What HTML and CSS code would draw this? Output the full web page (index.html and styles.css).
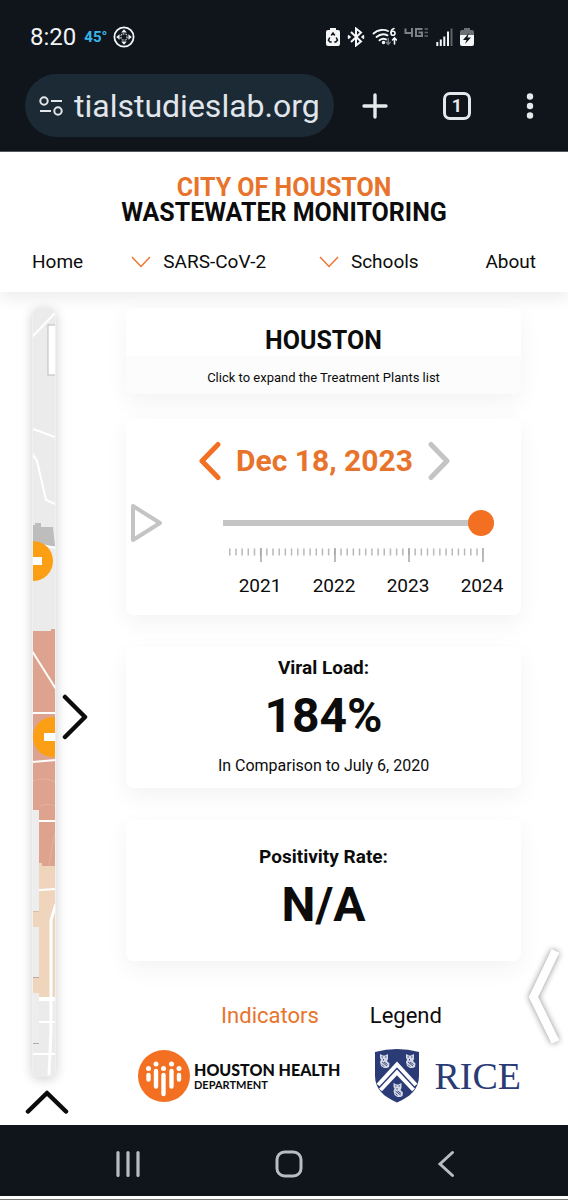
FILE: index.html
```html
<!DOCTYPE html>
<html lang="en">
<head>
<meta charset="utf-8">
<meta name="viewport" content="width=device-width, initial-scale=1">
<title>City of Houston Wastewater Monitoring</title>
<link rel="stylesheet" href="styles.css">
</head>
<body>
<div class="browser">
  <div class="status">
    <span class="clock">8:20</span>
    <span class="temp">45°</span>
    <svg class="status-disc" width="22" height="22" viewBox="0 0 22 22" fill="none" stroke="#f2f4f6" stroke-width="1.8"><circle cx="11" cy="11" r="9.6"/><g fill="#f2f4f6" stroke="none"><path d="M11 3.200l2.800 3.400H8.200zM11 18.800l2.800-3.400H8.200zM3.200 11l3.400-2.800v5.600zM18.800 11l-3.400-2.800v5.600z"/></g><rect x="8" y="8" width="6" height="6" rx="1.500" stroke-width="1" stroke-dasharray="2 1"/></svg>
    <span class="status-icons">
      <svg width="14" height="20" viewBox="0 0 14 20"><path d="M4 1h6v2h2a2 2 0 0 1 2 2v12a2 2 0 0 1-2 2H2a2 2 0 0 1-2-2V5a2 2 0 0 1 2-2h2z" fill="#f5f6f7"/><path d="M5.200 8.500L7 6l1.800 2.500M10.200 10.500l1.300 2.700-1.700 1.700H8.300M5.700 14.900H4l-1.600-1.700 1.400-2.700" fill="none" stroke="#10151c" stroke-width="1.500"/></svg>
      <svg width="18" height="20" viewBox="0 0 18 20" fill="none" stroke="#f5f6f7" stroke-width="2"><path d="M4 5l10 9.500-5 4V1.500l5 4L4 15"/><path d="M1 8.500l1.800 1.500L1 11.500M17 8.500L15.200 10l1.800 1.500" stroke-width="1.700"/></svg>
      <svg width="25" height="20" viewBox="0 0 25 20" fill="none" stroke="#f5f6f7" stroke-width="1.900" stroke-linecap="round"><path d="M1.500 6.500C6 2.500 12 2 16 4M4.500 10c3.500-3 7.500-3.500 11-1.700M7.500 13.300c2-1.600 4.500-2 6.500-.9"/><circle cx="11.500" cy="15.500" r=".8" fill="#f5f6f7"/><path d="M22 1.500c-2 .5-3 2-3 4.300" stroke-width="1.600"/><circle cx="21" cy="6.300" r="2" stroke-width="1.600"/><path d="M22.500 17v-5.500M20.500 13l2-2 2 2" stroke-width="1.600"/><path d="M16.200 11.500V17M14.200 15.300l2 2 2-2" stroke="#777c82" stroke-width="1.600"/></svg>
      <svg width="25" height="20" viewBox="0 0 25 20" fill="none" stroke="#7d8085" stroke-width="2"><path d="M1.500 1.500v4.500h7.500M8 1v9M18.500 2H12v7h6V5.500h-3.500"/><path d="M20.500 2h3.500M20.500 5.500H24M20.500 9H24" stroke="#5d6268" stroke-width="1.500"/></svg>
      <svg width="17" height="20" viewBox="0 0 17 20" stroke="#f5f6f7" stroke-width="2"><path d="M1.300 15v4M4.800 12.500V19M8.300 9.500V19M12 4.500V19"/><path d="M15.500 1.500V19" stroke="#5d6268"/></svg>
      <svg width="14" height="20" viewBox="0 0 14 20"><path d="M4 1h6v2h2a2 2 0 0 1 2 2v4H0V5a2 2 0 0 1 2-2h2z" fill="#6c7075"/><path d="M0 8h14v9a2 2 0 0 1-2 2H2a2 2 0 0 1-2-2z" fill="#f5f6f7"/><path d="M9 6l-6 7h3.500L5 17l6-6.500H7.500z" fill="#10151c"/></svg>
    </span>
  </div>
  <div class="toolbar">
    <div class="address">
      <svg width="24" height="22" viewBox="0 0 24 22" fill="none" stroke="#e3e7ea" stroke-width="2"><circle cx="5" cy="6" r="3.700"/><path d="M12 6h11M1 16h11"/><circle cx="19" cy="16" r="3.700"/></svg>
      <input class="url" type="text" value="tialstudieslab.org" aria-label="Address">
    </div>
    <div class="tools">
      <button class="icon-btn" aria-label="New tab"><svg width="26" height="26" viewBox="0 0 26 26" stroke="#e6e9ec" stroke-width="3.400" stroke-linecap="round"><path d="M2 13h22M13 2v22"/></svg></button>
      <button class="icon-btn tab-count" aria-label="Tabs">1</button>
      <button class="icon-btn" aria-label="Menu"><svg width="8" height="26" viewBox="0 0 8 26" fill="#e6e9ec"><circle cx="4" cy="3.500" r="3.200"/><circle cx="4" cy="13" r="3.200"/><circle cx="4" cy="22.500" r="3.200"/></svg></button>
    </div>
  </div>
</div>

<header class="site-header">
  <h1 class="title"><span class="accent">CITY OF HOUSTON</span><span>WASTEWATER MONITORING</span></h1>
  <nav class="nav">
    <a href="#home">Home</a>
    <a href="#sars"><svg width="20" height="12" viewBox="0 0 20 12" fill="none" stroke="#ed7430" stroke-width="1.500"><path d="M1 1l9 9.500L19 1"/></svg>SARS-CoV-2</a>
    <a href="#schools"><svg width="20" height="12" viewBox="0 0 20 12" fill="none" stroke="#ed7430" stroke-width="1.500"><path d="M1 1l9 9.500L19 1"/></svg>Schools</a>
    <a href="#about">About</a>
  </nav>
</header>

<main class="main">
  <aside class="rail">
    <div class="map">
      <svg width="24" height="769" viewBox="0 0 24 769" preserveAspectRatio="none">
        <rect width="24" height="769" fill="#ebebeb"/>
        <g fill="none" stroke="#fff" stroke-width="2"><path d="M0 29L23 5M1 121l22 8M0 145l5 8 9 39 9 4"/></g>
        <rect x="16" y="17" width="8" height="50" fill="#fff" stroke="#bbb"/>
        <path d="M1 217h2v-2h6v4h12l2 19H1z" fill="#bdbdbd"/>
        <path d="M10 237l14 3" stroke="#fff" stroke-width="2"/>
        <circle cx="1" cy="253" r="20" fill="#fd9f14"/><path d="M0 249h10v8H0z" fill="#fff"/>
        <path d="M1 323h18v-2h5v238H1z" fill="#dda38e"/>
        <path d="M1 473c6-3 14-3 22 1M8 498c5-2 10-2 15 0M23 525c-3 12-4 20-6 33" fill="none" stroke="#e5b39f"/>
        <path d="M1 558h6v-3h3v3h14v131H1z" fill="#efd5bc"/>
        <g fill="none" stroke="#fff" stroke-width="2"><path d="M0 343l24 38M0 405h24M0 454l24-2M7 513h17M7 582l17-1M7 714h17M0 746h24"/><path d="M7 691h17" stroke-width="4"/><path d="M24 596l-5 16v110l-2 45" stroke-width="3"/></g>
        <circle cx="21" cy="429" r="20" fill="#fd9f14"/><path d="M12 425h12v8H12z" fill="#fff"/>
        <path d="M0 603h7M0 669.500h7M0 735.500h7" stroke="#b9aaa0"/>
        <path d="M0 502h7v101H0zM0 619h7v50H0zM0 685h7v50H0z" fill="#ededed"/>
        <path d="M.5 0v769M23.500 0v769" stroke="#f0f0f0"/>
      </svg>
    </div>
    <button class="icon-btn rail-next" aria-label="Expand map"><svg width="26" height="46" viewBox="0 0 26 46" fill="none" stroke="#0c0c0c" stroke-width="4.500" stroke-linecap="round" stroke-linejoin="round"><path d="M3 3l20 20L3 43"/></svg></button>
    <button class="icon-btn rail-up" aria-label="Scroll up"><svg width="44" height="24" viewBox="0 0 44 24" fill="none" stroke="#0c0c0c" stroke-width="4.500" stroke-linecap="round" stroke-linejoin="round"><path d="M3 21.500L22 3l19 18.500"/></svg></button>
  </aside>

  <section class="content">
    <button class="card plants">
      <span class="plants-name">HOUSTON</span>
      <span class="plants-hint">Click to expand the Treatment Plants list</span>
    </button>

    <div class="card timeline">
      <div class="date-row">
        <button class="icon-btn" aria-label="Previous week"><svg width="22" height="40" viewBox="0 0 22 40" fill="none" stroke="#f36f21" stroke-width="5" stroke-linecap="round" stroke-linejoin="round"><path d="M19 3.500L3 20l16 16.500"/></svg></button>
        <span class="date">Dec 18, 2023</span>
        <button class="icon-btn" aria-label="Next week"><svg width="22" height="40" viewBox="0 0 22 40" fill="none" stroke="#c4c4c4" stroke-width="5" stroke-linecap="round" stroke-linejoin="round"><path d="M3 3.500L19 20 3 36.500"/></svg></button>
      </div>
      <div class="slider-row">
        <button class="icon-btn" aria-label="Play"><svg width="34" height="40" viewBox="0 0 34 40" fill="none" stroke="#c4c4c4" stroke-width="4" stroke-linejoin="round"><path d="M3 3l27 17L3 37z"/></svg></button>
        <input class="slider" type="range" min="0" max="100" value="100" aria-label="Date">
      </div>
      <div class="scale">
        <svg class="ticks" height="14" viewBox="0 0 296 14" preserveAspectRatio="none" fill="none"><path d="M6 4H260" stroke="#b8b8b8" stroke-width="7" stroke-dasharray="1.500 4.680"/><path d="M38 0v14M112 0v14M186 0v14M260 0v14" stroke="#a6a6a6" stroke-width="1.500"/></svg>
        <span>2021</span><span>2022</span><span>2023</span><span>2024</span>
      </div>
    </div>

    <div class="card metric">
      <h2 class="metric-name">Viral Load:</h2>
      <p class="metric-value">184%</p>
      <p class="metric-note">In Comparison to July 6, 2020</p>
    </div>

    <div class="card metric">
      <h2 class="metric-name">Positivity Rate:</h2>
      <p class="metric-value">N/A</p>
    </div>

    <div class="tabs">
      <button class="tab tab-active">Indicators</button>
      <button class="tab">Legend</button>
    </div>

    <div class="logos">
      <a class="logo" href="#health">
        <svg width="52" height="52" viewBox="0 0 52 52"><circle cx="26" cy="26" r="26" fill="#f36f21"/><g fill="#fff"><circle cx="10.500" cy="18.500" r="2.500"/><circle cx="18" cy="14" r="2.500"/><circle cx="25.500" cy="18.500" r="2.500"/><circle cx="33.500" cy="14" r="2.500"/><circle cx="41" cy="18.500" r="2.500"/></g><g stroke="#fff" stroke-width="4.400" stroke-linecap="round"><path d="M10.500 25v4.500M18 21v15.500M25.500 25v19M33.500 21v15.500M41 25v4.500"/></g></svg>
        <span class="health"><span class="health-name">HOUSTON HEALTH</span><span class="health-dept">DEPARTMENT</span></span>
      </a>
      <a class="logo logo-rice" href="#rice">
        <svg width="46" height="54" viewBox="0 0 46 54"><path d="M1 3Q23-3 45 3v24c0 13-9 21-22 26.500C10 48 1 40 1 27z" fill="#2a3b75"/><path d="M4 36l19-20.500L42 36M6.500 41L23 23.500 39.500 41" fill="none" stroke="#fff" stroke-width="4"/><defs><g id="owl"><path d="M1 0l3 1.500h2L9 0v5L8 7l2.500 2.500L10 13l-2 1H5L2 12 1 8l1-2.500L1 4z" fill="#d5d9e5"/><path d="M2.500 3h1.500M6 3h1.500M4.500 5v1.500M3 8l5 4M5 8l3.500 2.500M3 10.500l2 2" stroke="#2a3b75" stroke-width=".9"/></g></defs><use href="#owl" x="5" y="5"/><use href="#owl" x="31" y="5"/><use href="#owl" x="18.500" y="34"/></svg>
        <span>RICE</span>
      </a>
    </div>
  </section>

  <button class="drawer" aria-label="Open drawer"><svg width="44" height="108" viewBox="0 0 44 108" fill="none"><path d="M33.500 8L11.500 54l22 45" stroke="#fff" stroke-width="8.500"/></svg></button>
</main>

<footer class="sysnav">
  <button class="icon-btn" aria-label="Recents"><svg width="26" height="28" viewBox="0 0 26 28" stroke="#b9bdc2" stroke-width="3.200" stroke-linecap="round"><path d="M3 2.500v23M13 2.500v23M23 2.500v23"/></svg></button>
  <button class="icon-btn" aria-label="Home"><svg width="28" height="28" viewBox="0 0 28 28" fill="none" stroke="#b9bdc2" stroke-width="3"><rect x="2" y="2" width="24" height="24" rx="7.500"/></svg></button>
  <button class="icon-btn" aria-label="Back"><svg width="18" height="28" viewBox="0 0 18 28" fill="none" stroke="#b9bdc2" stroke-width="3" stroke-linecap="round"><path d="M15.500 2.500L3 14l12.500 11.500"/></svg></button>
</footer>
</body>
</html>
```

FILE: styles.css
```css
* { box-sizing: border-box; }

body {
  margin: 0;
  min-height: 100vh;
  display: flex;
  flex-direction: column;
  font-family: Roboto, "Liberation Sans", sans-serif;
  color: #0c0c0c;
  background: #fff;
}

button { font: inherit; color: inherit; background: none; border: 0; padding: 0; }
svg { display: block; flex: none; }
a { color: inherit; text-decoration: none; }
h1, h2, p { margin: 0; }

.icon-btn { display: flex; align-items: center; justify-content: center; }

/* Browser chrome */
.browser { background: #10151c; border-bottom: 1px solid #55585e; }

.status {
  display: flex;
  align-items: center;
  height: 74px;
  padding: 0 94px 0 30px;
  color: #f2f4f6;
}
.clock { font-size: 24px; }
.temp { margin-left: 8px; font-size: 15px; font-weight: 700; color: #38b6ea; }
.status-disc { margin-left: 6px; }
.status-icons { display: flex; gap: 7px; margin-left: auto; }

.toolbar { display: flex; padding: 0 34px 14px 25px; }
.address {
  display: flex;
  align-items: center;
  gap: 11px;
  flex: 0 1 309px;
  min-width: 0;
  height: 63px;
  padding: 0 12px 0 14px;
  border-radius: 32px;
  background: #1b2a34;
}
.url {
  flex: 1;
  min-width: 0;
  padding: 0;
  border: 0;
  outline: 0;
  background: none;
  font: 32px/40px Roboto, sans-serif;
  color: #e0e6ec;
}
.tools {
  display: flex;
  flex: 1;
  align-items: center;
  justify-content: space-between;
  padding-left: 28px;
}
.tab-count {
  width: 28px;
  height: 28px;
  border: 3px solid #e6e9ec;
  border-radius: 7px;
  font-size: 18px;
  font-weight: 700;
  color: #e6e9ec;
}

/* Site header */
.site-header {
  padding: 23px 32px 17px;
  box-shadow: 0 6px 16px rgba(0, 0, 0, .08);
}
.title {
  display: flex;
  flex-direction: column;
  align-items: center;
  font-size: 25px;
  line-height: 25px;
  font-weight: 700;
}
.accent { color: #e8742c; }
.nav {
  display: grid;
  grid-template-columns: 99fr 187fr 166fr auto;
  margin-top: 24px;
  font-size: 19px;
  line-height: 26px;
}
.nav a { display: flex; align-items: center; gap: 12px; }

/* Main area */
.main {
  position: relative;
  flex: 1;
  display: grid;
  grid-template-columns: 126px 1fr;
  padding: 16px 47px 0 0;
}
.rail {
  display: grid;
  grid-template-columns: 56px 1fr;
  grid-template-rows: auto 1fr;
}
.map {
  margin-left: 32px;
  border-radius: 8px;
  overflow: hidden;
  box-shadow: 0 2px 12px rgba(0, 0, 0, .2);
}
.rail-next { justify-self: start; align-self: center; padding: 48px 0 0 6px; }
.rail-up { grid-column: 1 / -1; justify-self: start; align-self: start; padding: 13px 0 0 25px; }

.content { display: flex; flex-direction: column; min-width: 0; }
.card {
  background: #fff;
  border-radius: 8px;
  box-shadow: 0 8px 24px rgba(0, 0, 0, .05);
}

.plants { display: flex; flex-direction: column; overflow: hidden; text-align: center; }
.plants-name { width: 100%; padding: 18px 0 0; font-size: 25px; line-height: 30px; font-weight: 700; }
.plants-hint { width: 100%; padding: 13px 0 7px; font-size: 13px; line-height: 18px; background: #fcfcfc; }

.timeline { margin-top: 25px; padding: 22px 2px 16px 4px; }
.date-row { display: flex; align-items: center; justify-content: center; gap: 15px; }
.date { font-size: 30px; line-height: 40px; font-weight: 700; color: #e8742c; }
.slider-row { display: flex; align-items: center; justify-content: space-between; margin-top: 22px; }
.slider {
  appearance: none;
  flex: 0 0 271px;
  height: 26px;
  margin: 0 25px 0 0;
  background: linear-gradient(#c4c4c4, #c4c4c4) center / 100% 6px no-repeat;
}
.slider::-webkit-slider-thumb {
  appearance: none;
  width: 26px;
  height: 26px;
  border-radius: 50%;
  background: #f36f21;
}
.scale {
  display: grid;
  grid-template-columns: repeat(4, 74px);
  justify-content: end;
  row-gap: 11px;
  margin-top: 5px;
  font-size: 19px;
  line-height: 26px;
  text-align: center;
}
.ticks { grid-column: 1 / -1; width: 100%; }

.metric {
  display: flex;
  flex-direction: column;
  align-items: center;
  justify-content: center;
  min-height: 141px;
  margin-top: 32px;
  padding-bottom: 4px;
  text-align: center;
}
.metric-name { font-size: 19px; line-height: 24px; font-weight: 700; }
.metric-value { font-size: 48px; line-height: 56px; font-weight: 700; margin-top: 8px; }
.metric-note { font-size: 16px; line-height: 20px; margin-top: 12px; }

.tabs { display: flex; justify-content: center; gap: 51px; margin-top: 41px; padding-left: 16px; }
.tab { font-size: 22px; line-height: 28px; }
.tab-active { color: #e8742c; }

.logos { display: flex; justify-content: space-between; align-items: center; margin-top: 19px; padding-left: 12px; }
.logo { display: flex; align-items: center; gap: 4px; }
.health { display: flex; flex-direction: column; font-family: Lato, sans-serif; font-weight: 900; }
.health-name { font-size: 16px; line-height: 18px; }
.health-dept { font-size: 11px; line-height: 12px; font-weight: 700; }
.logo-rice { gap: 14px; font: 38px/54px "Liberation Serif", serif; color: #2a3b75; }

.drawer { position: absolute; right: 2px; bottom: 74px; filter: drop-shadow(0 0 3px rgba(0, 0, 0, .45)); }

/* System navigation */
.sysnav {
  display: flex;
  justify-content: space-between;
  align-items: center;
  height: 71px;
  margin-bottom: 4px;
  padding: 6px 113px 0 115px;
  background: #10151c;
  box-shadow: 0 3px #fff, 0 4px #777;
}
```
